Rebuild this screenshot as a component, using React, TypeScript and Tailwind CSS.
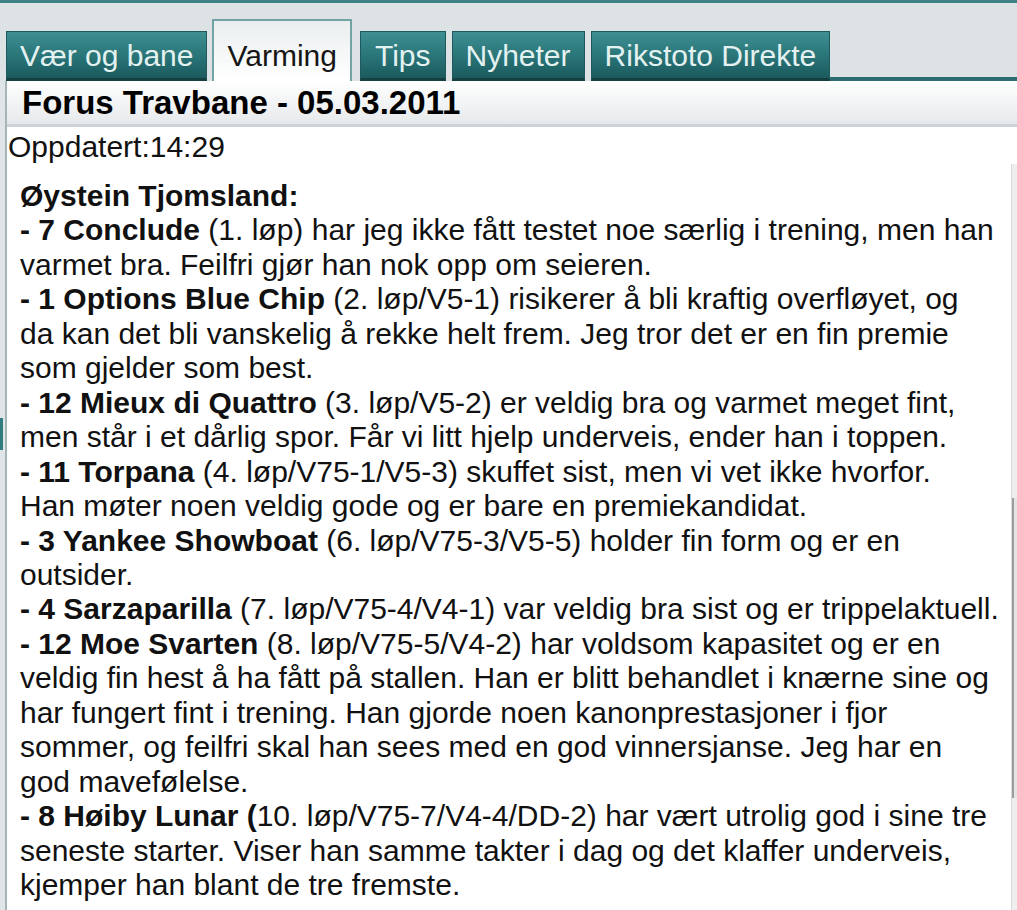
import React from 'react';

const tabs = [
  { label: 'Vær og bane', active: false, gap: 'px-[13px]' },
  { label: 'Varming', active: true, gap: 'ml-[5px] mr-[8px] px-[13px]' },
  { label: 'Tips', active: false, gap: 'px-[14px]' },
  { label: 'Nyheter', active: false, gap: 'ml-[6px] px-[13px]' },
  { label: 'Rikstoto Direkte', active: false, gap: 'ml-[6px] px-[13px]' },
];

// each line is [bold part, normal part]
const lines: [string, string][] = [
  ['Øystein Tjomsland:', ''],
  ['- 7 Conclude', ' (1. løp) har jeg ikke fått testet noe særlig i trening, men han'],
  ['', 'varmet bra. Feilfri gjør han nok opp om seieren.'],
  ['- 1 Options Blue Chip', ' (2. løp/V5-1) risikerer å bli kraftig overfløyet, og'],
  ['', 'da kan det bli vanskelig å rekke helt frem. Jeg tror det er en fin premie'],
  ['', 'som gjelder som best.'],
  ['- 12 Mieux di Quattro', ' (3. løp/V5-2) er veldig bra og varmet meget fint,'],
  ['', 'men står i et dårlig spor. Får vi litt hjelp underveis, ender han i toppen.'],
  ['- 11 Torpana', ' (4. løp/V75-1/V5-3) skuffet sist, men vi vet ikke hvorfor.'],
  ['', 'Han møter noen veldig gode og er bare en premiekandidat.'],
  ['- 3 Yankee Showboat', ' (6. løp/V75-3/V5-5) holder fin form og er en'],
  ['', 'outsider.'],
  ['- 4 Sarzaparilla', ' (7. løp/V75-4/V4-1) var veldig bra sist og er trippelaktuell.'],
  ['- 12 Moe Svarten', ' (8. løp/V75-5/V4-2) har voldsom kapasitet og er en'],
  ['', 'veldig fin hest å ha fått på stallen. Han er blitt behandlet i knærne sine og'],
  ['', 'har fungert fint i trening. Han gjorde noen kanonprestasjoner i fjor'],
  ['', 'sommer, og feilfri skal han sees med en god vinnersjanse. Jeg har en'],
  ['', 'god mavefølelse.'],
  ['- 8 Høiby Lunar (', '10. løp/V75-7/V4-4/DD-2) har vært utrolig god i sine tre'],
  ['', 'seneste starter. Viser han samme takter i dag og det klaffer underveis,'],
  ['', 'kjemper han blant de tre fremste.'],
];

export default function App() {
  return (
    <div className="w-[1017px] h-[910px] overflow-hidden bg-white flex flex-col font-['Liberation_Sans',Arial,sans-serif] text-[#111]">
      {/* top rule */}
      <div className="h-[3px] bg-[#3f8285] shrink-0" />

      {/* tab strip */}
      <div className="h-[78px] shrink-0 flex items-end bg-[#dde2e5] pl-[6px]">
        {tabs.map((t) =>
          t.active ? (
            <div
              key={t.label}
              className={
                'h-[62px] flex items-end pb-[8px] border-2 border-b-0 border-[#74a3a5] bg-gradient-to-b from-[#eaeeef] to-white text-[30px] leading-[34px] text-[#161616] whitespace-nowrap ' +
                t.gap
              }
            >
              {t.label}
            </div>
          ) : (
            <div
              key={t.label}
              className={
                'h-[50px] flex items-end pb-[5px] border border-b-[3px] border-[#1d5a5d] border-b-[#163f42] bg-gradient-to-b from-[#3e8f92] via-[#2a7679] to-[#1b5a5e] text-[30px] leading-[34px] text-[#e4f1f1] whitespace-nowrap ' +
                t.gap
              }
            >
              {t.label}
            </div>
          )
        )}
        <div className="flex-1 h-[4px] bg-[#2b6d70]" />
      </div>

      {/* panel */}
      <div className="flex-1 flex min-h-0">
        <div className="w-[5px] shrink-0 bg-[#e0e5e7] flex flex-col">
          <div className="h-[337px]" />
          <div className="h-[32px] w-[3px] bg-[#2f7b7e]" />
        </div>
        <div className="w-[2px] shrink-0 bg-[#a5b4b6]" />

        <div className="flex-1 flex flex-col min-w-0">
          <div className="h-[46px] shrink-0 flex items-center pl-[15px] bg-gradient-to-b from-white to-[#e6e9eb] border-b-[3px] border-[#cdd2d6]">
            <span className="text-[33px] font-bold text-black leading-none">Forus Travbane - 05.03.2011</span>
          </div>

          <div className="pt-[3px] pl-[1px] text-[30px] leading-[34px]">Oppdatert:14:29</div>

          <div className="flex-1 flex min-h-0">
            <div className="flex-1 pt-[15px] pl-[13px] text-[30px] leading-[34.45px] whitespace-nowrap">
              {lines.map(([b, n], i) => (
                <div key={i}>
                  {b && <b className="font-bold">{b}</b>}
                  {n}
                </div>
              ))}
            </div>
            <div className="w-[6px] shrink-0 bg-[#eeeeee] border-l border-[#dadada] flex flex-col">
              <div className="h-[334px]" />
              <div className="h-[300px] border-l-2 border-[#9c9c9c] bg-[#e4e4e4]" />
            </div>
          </div>
        </div>
      </div>
    </div>
  );
}
